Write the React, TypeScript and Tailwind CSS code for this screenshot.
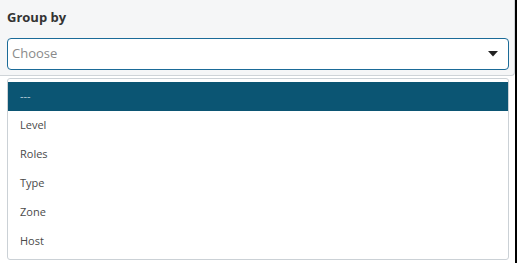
import React from "react";

const items = ["---", "Level", "Roles", "Type", "Zone", "Host"];

export default function App() {
  return (
    <div
      className="w-[517px] h-[263px] overflow-hidden bg-white border-r-2 border-black"
      style={{ fontFamily: '"Open Sans", "Noto Sans", sans-serif' }}
    >
      <div className="w-[515px] h-[76px] bg-[#f5f6f7] border-b border-r border-[#cfd4d8] rounded-br-[4px] px-[7px] pt-[8px]">
        <div className="text-[13px] leading-[18px] font-bold text-[#333]">Group by</div>
        <div className="mt-[12px] w-[502px] h-[32px] bg-white border border-[#1b6b98] rounded-[4px] flex items-center justify-between pl-[4px] pr-[10px]">
          <span className="text-[13px] text-[#8a8a8a]">Choose</span>
          <svg width="10" height="6" viewBox="0 0 10 6">
            <path d="M0 0 H10 L5 5.5 Z" fill="#222" />
          </svg>
        </div>
      </div>
      <div className="ml-[7px] mt-[2px] w-[502px] h-[182px] bg-white border border-[#cbd1d6] rounded-[3px] py-[3px]">
        {items.map((it, i) => (
          <div
            key={it}
            className={
              i === 0
                ? "h-[29px] flex items-center pl-[12px] bg-[#0b5573] text-[#b9cdd8] text-[11px]"
                : "h-[29px] flex items-center pl-[12px] text-[#4a4a4a] text-[11px]"
            }
          >
            {it}
          </div>
        ))}
      </div>
    </div>
  );
}
